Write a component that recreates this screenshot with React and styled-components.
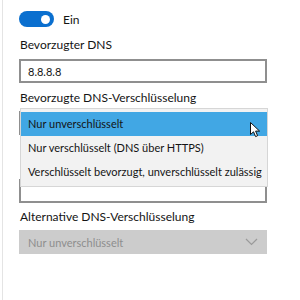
import styled, { createGlobalStyle } from "styled-components";

const GlobalStyle = createGlobalStyle`
  html, body {
    margin: 0;
    padding: 0;
    background: #fff;
  }
  body {
    font-family: "Lato", "Noto Sans", sans-serif;
    color: #141414;
  }
`;

const Frame = styled.div`
  width: 298px;
  height: 300px;
  margin-left: 2px;
  border-left: 1px solid #e4e4e4;
  box-sizing: border-box;
  padding-left: 16px;
  overflow: hidden;
`;

const Form = styled.div`
  width: 248px;
  display: flex;
  flex-direction: column;
`;

const ToggleRow = styled.div`
  display: flex;
  align-items: center;
  gap: 9px;
  margin-top: 11px;
  height: 16px;
  font-size: 12px;
`;

const Switch = styled.div`
  width: 35px;
  height: 16px;
  border-radius: 8px;
  background: #0a6fcf;
  display: flex;
  align-items: center;
  justify-content: flex-end;
  padding-right: 4px;
  box-sizing: border-box;
`;

const Knob = styled.div`
  width: 9px;
  height: 9px;
  border-radius: 50%;
  background: #fff;
`;

const Label = styled.div`
  font-size: 12px;
  line-height: 18px;
  height: 18px;
  padding-left: 1px;
  margin-top: ${(p) => p.$gap ?? 6}px;
  white-space: nowrap;
`;

const Field = styled.div`
  position: relative;
  height: 24px;
  margin-top: ${(p) => p.$gap ?? 5}px;
  box-sizing: border-box;
  border: 2px solid ${(p) => (p.$disabled ? "#cccccc" : "#8f8f8f")};
  background: ${(p) => (p.$disabled ? "#cccccc" : "#fff")};
  display: flex;
  align-items: center;
  justify-content: space-between;
  padding: 0 7px;
  font-size: 11px;
  color: ${(p) => (p.$disabled ? "#8e8e8e" : "#141414")};
`;

const Popup = styled.div`
  position: absolute;
  left: -1px;
  top: -5px;
  width: 248px;
  box-sizing: border-box;
  padding: 3px 0 2px;
  background: #f2f2f2;
  border: 1px solid #d6d6d6;
  z-index: 2;
`;

const Option = styled.div`
  height: 24px;
  line-height: 24px;
  padding-left: 7px;
  font-size: 11px;
  white-space: nowrap;
  color: #141414;
  background: ${(p) => (p.$active ? "#41a7e4" : "transparent")};
`;

const Pointer = styled.svg`
  position: absolute;
  left: 229px;
  top: 13px;
  z-index: 3;
`;

const Spacer = styled.div`
  height: ${(p) => p.$h}px;
`;

const options = [
  "Nur unverschlüsselt",
  "Nur verschlüsselt (DNS über HTTPS)",
  "Verschlüsselt bevorzugt, unverschlüsselt zulässig",
];

export default function App() {
  return (
    <>
      <GlobalStyle />
      <Frame>
        <Form>
          <ToggleRow>
            <Switch>
              <Knob />
            </Switch>
            Ein
          </ToggleRow>
          <Label $gap={9}>Bevorzugter DNS</Label>
          <Field>8.8.8.8</Field>
          <Label>Bevorzugte DNS-Verschlüsselung</Label>
          <Field $gap={4}>
            <Popup>
              {options.map((o, i) => (
                <Option key={o} $active={i === 0}>
                  {o}
                </Option>
              ))}
              <Pointer width="11" height="16" viewBox="0 0 11 16">
                <path
                  d="M0.5 0.5 L0.5 12.5 L3.5 9.8 L5.6 14.6 L7.6 13.7 L5.6 9.1 L9.6 9.1 Z"
                  fill="#fff"
                  stroke="#111"
                  strokeWidth="1"
                  strokeLinejoin="round"
                />
              </Pointer>
            </Popup>
          </Field>
          <Spacer $h={44} />
          <Field $gap={0} />
          <Label $gap={5}>Alternative DNS-Verschlüsselung</Label>
          <Field $gap={4} $disabled>
            Nur unverschlüsselt
            <svg width="13" height="8" viewBox="0 0 13 8">
              <path d="M1 1 L6.5 6.5 L12 1" fill="none" stroke="#9a9a9a" strokeWidth="1.2" />
            </svg>
          </Field>
        </Form>
      </Frame>
    </>
  );
}
